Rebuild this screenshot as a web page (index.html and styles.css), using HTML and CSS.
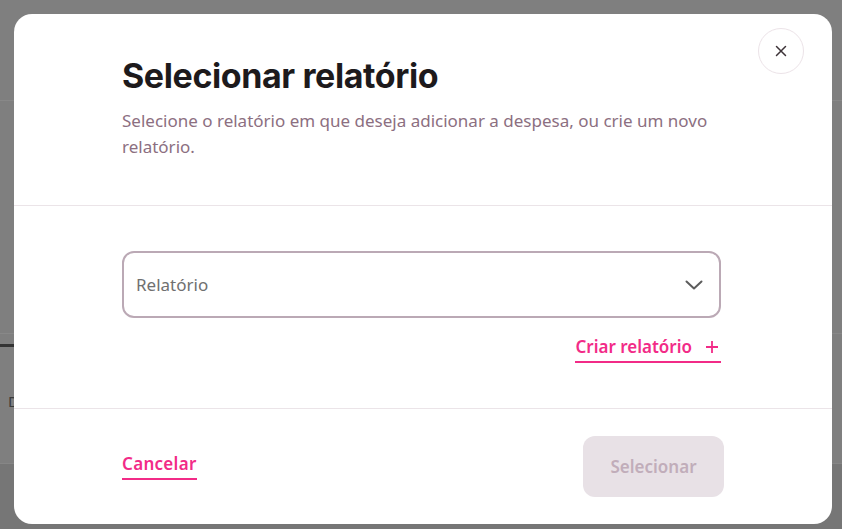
FILE: index.html
```html
<!DOCTYPE html>
<html lang="pt-BR">
<head>
<meta charset="utf-8">
<title>Selecionar relatório</title>
<link rel="stylesheet" href="styles.css">
</head>
<body>
<div class="page">
  <div class="page-top"></div>
  <div class="page-mid">
    <span class="ghost-icon"></span>
  </div>
  <div class="page-tabs">
    <span class="tab-bar"></span>
    <span class="ghost-d">D</span>
  </div>
  <div class="page-bottom"></div>
</div>

<div class="modal" role="dialog" aria-labelledby="modal-title">
  <button class="close" aria-label="Fechar">
    <svg width="12" height="12" viewBox="0 0 12 12"><path d="M1.5 1.5L10.5 10.5M10.5 1.5L1.5 10.5" stroke="#3d3338" stroke-width="1.5" stroke-linecap="round"/></svg>
  </button>
  <div class="modal-header">
    <h1 id="modal-title" class="title">Selecionar relatório</h1>
    <p class="subtitle">Selecione o relatório em que deseja adicionar a despesa, ou crie um novo relatório.</p>
  </div>
  <div class="modal-body">
    <div class="select">
      <span class="select-label">Relatório</span>
      <svg class="chevron" width="18" height="10" viewBox="0 0 18 10"><path d="M1.5 1.5L9 8.5L16.5 1.5" fill="none" stroke="#5c5c5c" stroke-width="2" stroke-linecap="round" stroke-linejoin="round"/></svg>
    </div>
    <div class="create-row">
      <a class="link create">Criar relatório <svg width="14" height="14" viewBox="0 0 14 14"><path d="M7 1V13M1 7H13" stroke="#f22b87" stroke-width="1.8"/></svg></a>
    </div>
  </div>
  <div class="modal-footer">
    <a class="link cancel">Cancelar</a>
    <button class="btn-primary" disabled>Selecionar</button>
  </div>
</div>
</body>
</html>
```

FILE: styles.css
```css
* { box-sizing: border-box; }
html, body { margin: 0; padding: 0; }
body {
  width: 842px;
  height: 529px;
  overflow: hidden;
  background: #7f7f7f;
  font-family: "Noto Sans", "Liberation Sans", sans-serif;
}

.page { display: flex; flex-direction: column; height: 529px; }
.page-top { height: 101px; border-bottom: 1px solid #888; }
.page-mid { height: 233px; border-bottom: 1px solid #888; position: relative; }
.page-tabs { height: 129px; border-top: 0; position: relative; }
.tab-bar { display: block; width: 14px; height: 3px; background: #333; margin-top: 10px; }
.ghost-d { display: block; color: #3a3a3a; font-size: 15px; margin-top: 44px; margin-left: 8px; }
.page-bottom { flex: 1; background: #767676; border-top: 1px solid #868686; }

.modal {
  position: absolute;
  top: 14px;
  left: 14px;
  width: 818px;
  height: 510px;
  background: #fff;
  border-radius: 18px;
  display: flex;
  flex-direction: column;
}

.close {
  position: absolute;
  top: 14px;
  right: 28px;
  width: 46px;
  height: 46px;
  border-radius: 50%;
  border: 1px solid #ece3e8;
  background: #fff;
  display: flex;
  align-items: center;
  justify-content: center;
  padding: 0;
}

.modal-header {
  padding: 41px 108px 45px;
  border-bottom: 1px solid #ebe4e8;
}
.title {
  margin: 0;
  font-family: "Inter", "Noto Sans", sans-serif;
  font-size: 34px;
  line-height: 42px;
  font-weight: 700;
  color: #1d1a1c;
  letter-spacing: -0.4px;
}
.subtitle {
  margin: 11px 0 0;
  font-size: 17px;
  line-height: 26px;
  color: #8c6f81;
  max-width: 600px;
}

.modal-body {
  padding: 45px 111px 0 108px;
  height: 203px;
  border-bottom: 1px solid #ebe4e8;
}
.select {
  height: 67px;
  border: 2px solid #bba9b5;
  border-radius: 12px;
  display: flex;
  align-items: center;
  justify-content: space-between;
  padding: 0 16px 0 12px;
}
.select-label { font-size: 17px; color: #707070; }
.chevron { display: block; }

.create-row { display: flex; justify-content: flex-end; margin-top: 18px; }
.link {
  font-size: 17px;
  font-weight: 600;
  color: #f22b87;
  border-bottom: 2px solid #f22b87;
  line-height: 22px;
  padding-bottom: 3px;
  display: inline-flex;
  align-items: center;
  gap: 13px;
  cursor: pointer;
}
.create { padding-right: 2px; }

.modal-footer {
  flex: 1;
  display: flex;
  align-items: center;
  justify-content: space-between;
  padding: 0 108px;
}
.cancel { letter-spacing: 0.3px; }
.btn-primary {
  width: 141px;
  height: 61px;
  border: 0;
  border-radius: 12px;
  background: #e8e1e6;
  color: #c1adba;
  font-family: "Noto Sans", "Liberation Sans", sans-serif;
  font-size: 17px;
  font-weight: 600;
}
```
